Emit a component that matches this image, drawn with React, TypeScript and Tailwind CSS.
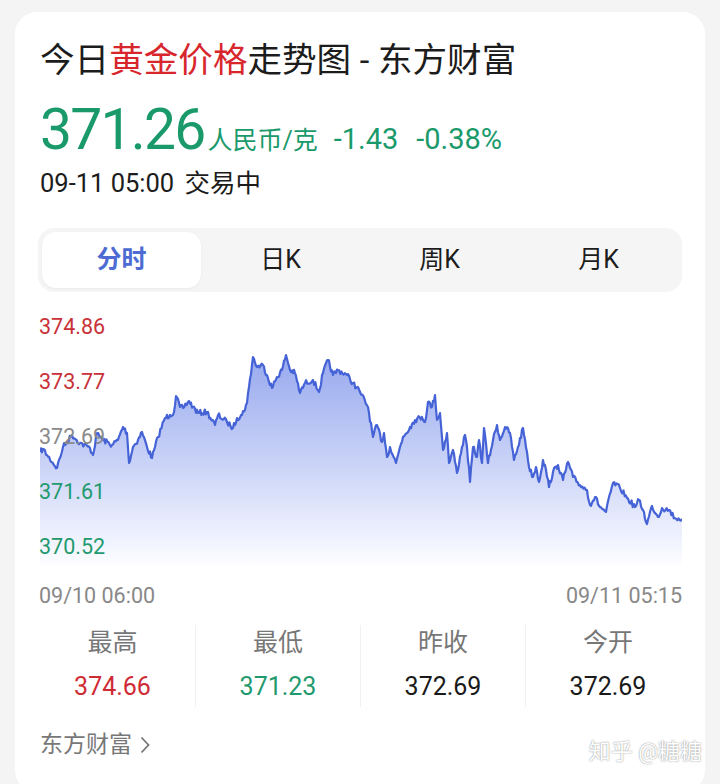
import React from 'react'

// key points of the intraday line, in page coordinates (x, y)
const KEY: [number, number][] = [
  [40, 452], [43, 449], [47, 455], [57, 468], [63, 447], [72, 435], [80, 443], [90, 448],
  [93, 455], [97, 433], [103, 440], [112, 445], [118, 440], [123, 427], [127, 433], [129, 463],
  [133, 447], [138, 440], [142, 432], [147, 447], [152, 458], [155, 447], [158, 437], [165, 418],
  [170, 415], [174, 412], [176, 396], [180, 407], [183, 408], [189, 401], [193, 407], [198, 413],
  [207, 412], [215, 425], [218, 415], [227, 422], [233, 428], [237, 418], [242, 415], [247, 403],
  [249, 387], [253, 357], [257, 367], [263, 365], [267, 375], [272, 388], [277, 377], [282, 370],
  [286, 355], [290, 370], [295, 373], [300, 393], [305, 383], [313, 380], [319, 392], [323, 373],
  [328, 360], [333, 375], [338, 370], [347, 375], [353, 383], [360, 392], [368, 407], [373, 437],
  [377, 425], [382, 442], [384, 433], [387, 457], [390, 447], [396, 463], [400, 447], [403, 437],
  [410, 427], [415, 420], [422, 417], [425, 422], [428, 402], [432, 407], [435, 395], [437, 420],
  [440, 413], [443, 450], [447, 433], [449, 463], [453, 450], [457, 473], [462, 447], [465, 435],
  [467, 447], [470, 482], [473, 447], [477, 457], [479, 440], [482, 463], [484, 428], [488, 463],
  [493, 440], [497, 425], [500, 440], [505, 427], [510, 433], [514, 460], [518, 447], [523, 428],
  [527, 452], [529, 467], [533, 477], [536, 467], [539, 482], [543, 460], [546, 470], [549, 487],
  [553, 472], [558, 465], [563, 480], [568, 462], [573, 477], [580, 485], [587, 490], [590, 505],
  [595, 497], [600, 507], [606, 512], [613, 483], [620, 488], [627, 498], [635, 507], [639, 500],
  [643, 510], [647, 524], [652, 506], [658, 517], [662, 508], [669, 510], [675, 518], [682, 519],
]

const OX = 40
const OY = 300

function buildLine() {
  let seed = 7
  const rand = () => {
    seed = (seed * 16807) % 2147483647
    return seed / 2147483647
  }
  const pts: [number, number][] = []
  for (let i = 0; i < KEY.length - 1; i++) {
    const [x0, y0] = KEY[i]
    const [x1, y1] = KEY[i + 1]
    const steps = Math.max(1, Math.round((x1 - x0) / 1.1))
    for (let s = 0; s < steps; s++) {
      const t = s / steps
      const jitter = s === 0 ? 0 : (rand() - 0.5) * 5.5
      pts.push([x0 + (x1 - x0) * t - OX, y0 + (y1 - y0) * t + jitter - OY])
    }
  }
  const last = KEY[KEY.length - 1]
  pts.push([last[0] - OX, last[1] - OY])
  return pts
}

const POINTS = buildLine()
const LINE = POINTS.map(([x, y], i) => `${i ? 'L' : 'M'}${x.toFixed(1)},${y.toFixed(1)}`).join(' ')
const AREA = `${LINE} L${POINTS[POINTS.length - 1][0].toFixed(1)},270 L0,270 Z`

const axis = [
  { v: '374.86', c: 'text-[#c8313a]' },
  { v: '373.77', c: 'text-[#c8313a]' },
  { v: '372.69', c: 'text-[#8a8a8a]' },
  { v: '371.61', c: 'text-[#1f9a6e]' },
  { v: '370.52', c: 'text-[#1f9a6e]' },
]

const stats = [
  { label: '最高', value: '374.66', c: 'text-[#cf2b35]' },
  { label: '最低', value: '371.23', c: 'text-[#1f9a6e]' },
  { label: '昨收', value: '372.69', c: 'text-[#1a1a1a]' },
  { label: '今开', value: '372.69', c: 'text-[#1a1a1a]' },
]

const tabs = ['分时', '日K', '周K', '月K']

export default function App() {
  return (
    <div className="w-[720px] h-[784px] overflow-hidden bg-[#f4f4f4] px-[15px] pt-[12px] font-['Roboto','Noto_Sans_CJK_SC',sans-serif]">
      <div className="relative h-[780px] rounded-[22px] bg-white pl-[25px] pr-[23px] pt-[26px]">
        {/* title */}
        <h1 className="text-[34.6px] leading-[44px] text-[#1c1c1c] whitespace-nowrap">
          今日<span className="text-[#d8262d]">黄金价格</span>走势图 - 东方财富
        </h1>

        {/* price */}
        <div className="mt-[18px] flex h-[60px] items-baseline text-[#1a9a6b] leading-[60px] whitespace-nowrap">
          <span className="text-[57px] tracking-[-1.8px]">371.26</span>
          <span className="ml-[3px] text-[25px]">人民币/克</span>
          <span className="ml-[16px] text-[29px]">-1.43</span>
          <span className="ml-[18px] text-[29px]">-0.38%</span>
        </div>

        <div className="mt-[8px] text-[25.5px] leading-[30px] text-[#1c1c1c]">
          09-11 05:00 <span className="ml-[4px]">交易中</span>
        </div>

        {/* tabs */}
        <div className="mt-[30px] -ml-[2px] grid h-[64px] grid-cols-4 rounded-[16px] bg-[#f5f5f5] p-[4px]">
          {tabs.map((t, i) => (
            <div
              key={t}
              className={
                i === 0
                  ? 'flex items-center justify-center rounded-[14px] bg-white text-[25px] font-semibold text-[#4d6bd2] shadow-[0_1px_3px_rgba(0,0,0,0.05)]'
                  : 'flex items-center justify-center text-[25px] text-[#1c1c1c]'
              }
            >
              {t}
            </div>
          ))}
        </div>

        {/* chart */}
        <div className="relative mt-[8px] h-[270px]">
          <svg className="absolute inset-0" width="642" height="270" viewBox="0 0 642 270">
            <defs>
              <linearGradient id="fill" x1="0" y1="55" x2="0" y2="268" gradientUnits="userSpaceOnUse">
                <stop offset="0" stopColor="#98a9ee" />
                <stop offset="0.45" stopColor="#c4cef6" />
                <stop offset="0.85" stopColor="#eef1fd" />
                <stop offset="1" stopColor="#ffffff" />
              </linearGradient>
            </defs>
            <path d={AREA} fill="url(#fill)" />
            <path d={LINE} fill="none" stroke="#4563d6" strokeWidth="2.2" strokeLinejoin="round" />
          </svg>
          <div className="absolute left-[-1px] top-[15px] flex flex-col">
            {axis.map((a) => (
              <div key={a.v} className={`h-[55px] text-[21.5px] leading-[24px] ${a.c}`}>
                {a.v}
              </div>
            ))}
          </div>
        </div>

        <div className="mt-[14px] flex justify-between text-[21.5px] leading-[24px] text-[#888]">
          <span className="-ml-[1px]">09/10 06:00</span>
          <span>09/11 05:15</span>
        </div>

        {/* stats */}
        <div className="mt-[17px] -ml-[10px] -mr-[8px] grid grid-cols-4">
          {stats.map((s, i) => (
            <div
              key={s.label}
              className={`flex flex-col items-center ${i ? 'border-l border-[#f1f1f1]' : ''}`}
            >
              <span className="text-[25px] leading-[36px] text-[#777]">{s.label}</span>
              <span className={`mt-[6px] text-[25px] leading-[40px] ${s.c}`}>{s.value}</span>
            </div>
          ))}
        </div>

        <div className="mt-[23px] flex items-center text-[23px] leading-[30px] text-[#777]">
          东方财富
          <svg className="ml-[8px]" width="10" height="18" viewBox="0 0 10 18" fill="none">
            <path d="M1.5 1.5 L8.5 9 L1.5 16.5" stroke="#777" strokeWidth="1.8" />
          </svg>
        </div>

        <div className="absolute right-[3px] bottom-[27px] text-[22px] leading-[26px] text-white [text-shadow:0_0_1.5px_rgba(0,0,0,0.55)]">
          知乎 @糖糖
        </div>
      </div>
    </div>
  )
}
